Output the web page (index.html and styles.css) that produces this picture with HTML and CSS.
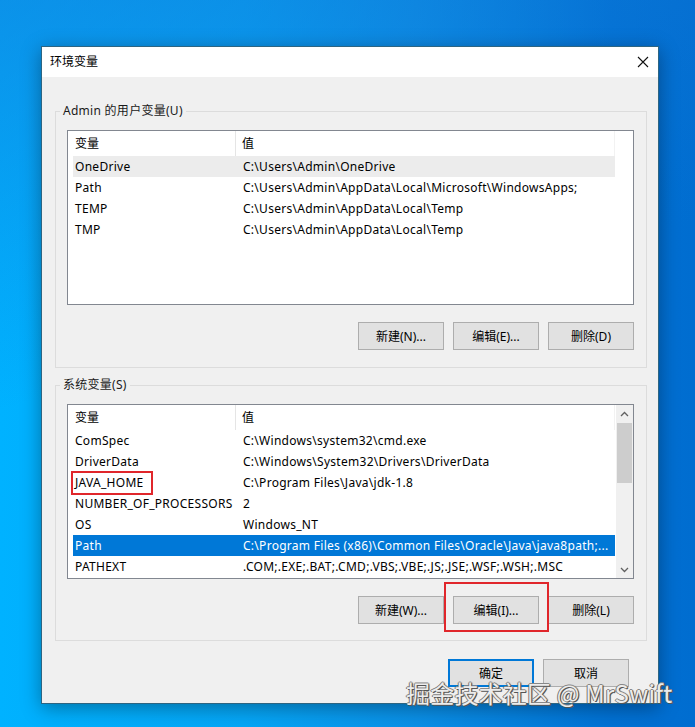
FILE: index.html
```html
<!DOCTYPE html>
<html lang="zh-CN">
<head>
<meta charset="utf-8">
<title>环境变量</title>
<link rel="stylesheet" href="styles.css">
</head>
<body>
<div class="desktop">
  <div class="dialog">
    <div class="titlebar">
      <span class="title">环境变量</span>
      <svg class="close" width="12" height="12" viewBox="0 0 12 12"><path d="M1 1 L11 11 M11 1 L1 11" stroke="#111" stroke-width="1.1" fill="none"/></svg>
    </div>
    <div class="content">
      <fieldset class="group">
        <legend>Admin 的用户变量(U)</legend>
        <div class="list">
          <div class="cols">
            <div class="header">
              <div class="hcell hname">变量</div>
              <div class="hcell hval">值</div>
            </div>
            <div class="row hot"><span class="c1">OneDrive</span><span class="c2">C:\Users\Admin\OneDrive</span></div>
            <div class="row"><span class="c1">Path</span><span class="c2">C:\Users\Admin\AppData\Local\Microsoft\WindowsApps;</span></div>
            <div class="row"><span class="c1">TEMP</span><span class="c2">C:\Users\Admin\AppData\Local\Temp</span></div>
            <div class="row"><span class="c1">TMP</span><span class="c2">C:\Users\Admin\AppData\Local\Temp</span></div>
          </div>
        </div>
        <div class="btnrow">
          <button class="btn">新建(N)...</button>
          <button class="btn">编辑(E)...</button>
          <button class="btn">删除(D)</button>
        </div>
      </fieldset>

      <fieldset class="group group2">
        <legend>系统变量(S)</legend>
        <div class="list">
          <div class="cols">
            <div class="header">
              <div class="hcell hname">变量</div>
              <div class="hcell hval">值</div>
            </div>
            <div class="row"><span class="c1">ComSpec</span><span class="c2">C:\Windows\system32\cmd.exe</span></div>
            <div class="row"><span class="c1">DriverData</span><span class="c2">C:\Windows\System32\Drivers\DriverData</span></div>
            <div class="row"><span class="c1"><span class="mark">JAVA_HOME</span></span><span class="c2">C:\Program Files\Java\jdk-1.8</span></div>
            <div class="row"><span class="c1">NUMBER_OF_PROCESSORS</span><span class="c2">2</span></div>
            <div class="row"><span class="c1">OS</span><span class="c2">Windows_NT</span></div>
            <div class="row sel"><span class="c1">Path</span><span class="c2">C:\Program Files (x86)\Common Files\Oracle\Java\java8path;...</span></div>
            <div class="row"><span class="c1">PATHEXT</span><span class="c2">.COM;.EXE;.BAT;.CMD;.VBS;.VBE;.JS;.JSE;.WSF;.WSH;.MSC</span></div>
          </div>
          <div class="scrollbar">
            <div class="arrow"><svg width="9" height="6" viewBox="0 0 9 6"><path d="M1 5 L4.5 1.5 L8 5" stroke="#606060" stroke-width="1.3" fill="none"/></svg></div>
            <div class="track"><div class="thumb"></div></div>
            <div class="arrow"><svg width="9" height="6" viewBox="0 0 9 6"><path d="M1 1 L4.5 4.5 L8 1" stroke="#606060" stroke-width="1.3" fill="none"/></svg></div>
          </div>
        </div>
        <div class="btnrow">
          <button class="btn">新建(W)...</button>
          <button class="btn marked">编辑(I)...</button>
          <button class="btn">删除(L)</button>
        </div>
      </fieldset>

      <div class="footer">
        <button class="btn default">确定</button>
        <button class="btn">取消</button>
      </div>
    </div>
  </div>
  <div class="watermark">掘金技术社区 @ MrSwift</div>
</div>
</body>
</html>
```
FILE: styles.css
```css
html, body {
  margin: 0;
  padding: 0;
}
body {
  width: 695px;
  height: 727px;
  overflow: hidden;
  font-family: "Noto Sans", "Noto Sans CJK SC", sans-serif;
  font-size: 12px;
  color: #000;
}
.desktop {
  position: relative;
  width: 695px;
  height: 727px;
  box-sizing: border-box;
  padding: 46px 0 0 41px;
  background:
    linear-gradient(165deg, rgba(20,120,215,0.55) 0%, rgba(20,120,215,0) 45%),
    linear-gradient(90deg, #00b2ff 0%, #05a6f6 35%, #0a8fe6 60%, #0071d4 88%, #006dd0 100%);
}
.dialog {
  width: 616px;
  height: 656px;
  border: 1px solid #2d6582;
  background: #f0f0f0;
  box-shadow: 0 4px 18px rgba(0, 0, 0, 0.35);
  display: flex;
  flex-direction: column;
}
.titlebar {
  height: 30px;
  background: #fff;
  display: flex;
  align-items: center;
  justify-content: space-between;
  padding: 0 9px 0 8px;
  flex: none;
}
.title {
  font-size: 12px;
  line-height: 16px;
}
.close {
  display: block;
}
.content {
  padding: 26px 0 0 13px;
  display: flex;
  flex-direction: column;
}
.group {
  width: 592px;
  box-sizing: border-box;
  margin: 0;
  border: 1px solid #dcdcdc;
  padding: 11px 12px 17px 11px;
  min-width: 0;
}
.group legend {
  padding: 0 3px;
  margin-left: -7px;
  line-height: 16px;
  font-size: 12px;
  letter-spacing: 0.28px;
  color: #1a1a1a;
}
.group2 {
  margin-top: 9px;
  padding-bottom: 16px;
}
.list {
  height: 175px;
  box-sizing: border-box;
  border: 1px solid #828790;
  background: #fff;
  display: flex;
}
.cols {
  width: 547px;
  flex: none;
  overflow: hidden;
}
.header {
  height: 25px;
  display: flex;
}
.hcell {
  display: flex;
  align-items: center;
  line-height: 16px;
}
.hname {
  width: 168px;
  box-sizing: border-box;
  padding-left: 7px;
  border-right: 1px solid #e5e5e5;
}
.hval {
  flex: 1;
  padding-left: 6px;
  border-right: 1px solid #f2f2f2;
}
.row {
  height: 21px;
  margin-left: 5px;
  display: flex;
  align-items: center;
  white-space: nowrap;
  line-height: 16px;
  letter-spacing: 0.28px;
}
.row .c1 {
  width: 163px;
  box-sizing: border-box;
  padding-left: 2px;
  flex: none;
}
.row .c2 {
  flex: 1;
  padding-left: 7px;
  overflow: hidden;
  text-overflow: ellipsis;
}
.row.hot {
  background: #ececec;
}
.row.sel {
  background: #0078d7;
  color: #fff;
}
.mark {
  position: relative;
}
.mark::after {
  content: "";
  position: absolute;
  left: -4px;
  right: -9px;
  top: -3px;
  bottom: -4px;
  border: 2px solid #e0262b;
}
.scrollbar {
  width: 17px;
  flex: none;
  margin-left: auto;
  background: #f0f0f0;
  display: flex;
  flex-direction: column;
}
.arrow {
  height: 17px;
  display: flex;
  align-items: center;
  justify-content: center;
  flex: none;
}
.track {
  flex: 1;
  padding: 1px 1px 0 1px;
}
.thumb {
  height: 60px;
  background: #cdcdcd;
}
.btnrow {
  display: flex;
  justify-content: flex-end;
  gap: 9px;
  margin-top: 17px;
}
.btn {
  width: 86px;
  height: 28px;
  box-sizing: border-box;
  border: 1px solid #adadad;
  background: #e1e1e1;
  font-family: "Noto Sans", "Noto Sans CJK SC", sans-serif;
  font-size: 12px;
  color: #000;
  padding: 0;
  margin: 0;
}
.btn.marked {
  position: relative;
}
.btn.marked::after {
  content: "";
  position: absolute;
  left: -10px;
  right: -11px;
  top: -15px;
  bottom: -9px;
  border: 2px solid #e0262b;
}
.btn.default {
  border: 2px solid #0078d7;
}
.footer {
  display: flex;
  justify-content: flex-end;
  gap: 9px;
  margin-top: 18px;
  margin-right: 29px;
}
.watermark {
  position: absolute;
  left: 406px;
  top: 678px;
  font-family: "Noto Sans CJK SC", "Noto Sans", sans-serif;
  font-size: 24px;
  letter-spacing: 0.2px;
  line-height: 30px;
  color: #ececec;
  white-space: nowrap;
  text-shadow: 1px 1px 0 #555, -1px 0 0 #777, 0 -1px 0 #888, 1px 0 1px #444;
}
```
